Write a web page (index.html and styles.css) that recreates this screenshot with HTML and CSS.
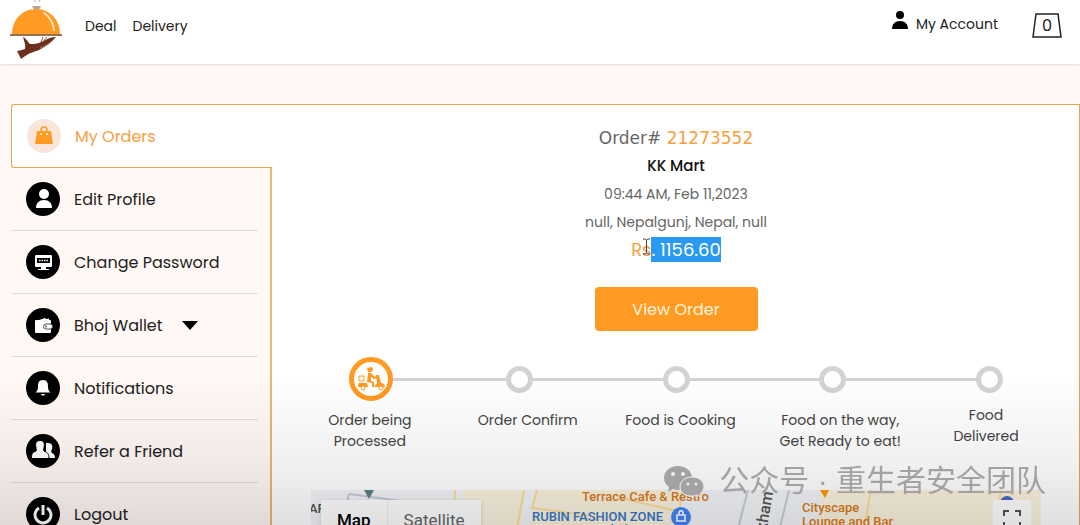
FILE: index.html
```html
<!DOCTYPE html>
<html lang="en">
<head>
  <meta charset="UTF-8" />
  <meta name="viewport" content="width=device-width, initial-scale=1.0"/>
  <title>My Orders</title>
  <link rel="stylesheet" href="styles.css">
</head>
<body>
  <header class="header">
    <a href="#" class="logo" aria-label="Home">
      <svg width="52" height="60" viewBox="0 0 52 60">
        <path d="M24 0l2 2M29 2l1-2" stroke="#aaa" fill="none"/>
        <path d="M22 6h9l-2 4h-5z" fill="#b9a79a"/>
        <path d="M2 34C2 20 12 9 26 9s24 11 24 25z" fill="#ff9a22"/>
        <path d="M34 13c6 4 9 9 10 17" stroke="#ffe3b8" stroke-width="2" fill="none" stroke-linecap="round"/>
        <path d="M0 34h52v2H0z" fill="#96724f"/>
        <path d="M13 37c3 1 5 5 7 7 4 0 7 0 11-2 5-2 9-5 15-5-5 6-11 10-17 13-5 2-9 2-18 9l-4-8c4-1 6-1 8-2 1-4-1-8-2-12z" fill="#6b2f1c"/>
        <path d="M37 37l-5 6M33 37l-2 5" stroke="#8a5a40" fill="none"/>
        <path d="M44 39c-5 5-9 7-14 9" stroke="#a9806a" fill="none"/>
      </svg>
    </a>
    <nav class="navbar">
      <a href="#">Deal</a>
      <a href="#">Delivery</a>
    </nav>
    <div class="header-right">
      <a href="#" class="account">
        <svg width="16" height="20" viewBox="0 0 16 20"><circle cx="8" cy="5" r="4"/><path d="M0 19c0-5 3-8 8-8s8 3 8 8z"/></svg>
        <span>My Account</span>
      </a>
      <button class="cart" aria-label="Cart">
        <svg width="30" height="26" viewBox="0 0 30 26"><path d="M4 1h22l3 23H1z" fill="none" stroke="#222" stroke-width="1.5"/></svg>
        <span>0</span>
      </button>
    </div>
  </header>

  <main class="account-page">
    <aside class="sidebar">
      <a href="#" class="side-link active">
        <svg width="34" height="34" viewBox="0 0 34 34"><circle cx="17" cy="17" r="17" fill="#fae6d8"/><path d="M10 12h14l2 13H8z" fill="#ff9a22"/><path d="M14 14v-3c0-4 6-4 6 0v3" fill="none" stroke="#ff9a22" stroke-width="1.5"/><circle cx="14" cy="15" r="1" fill="#fff"/><circle cx="20" cy="15" r="1" fill="#fff"/></svg>
        <span>My Orders</span>
      </a>
      <ul class="side-menu">
        <li><a href="#" class="side-link">
          <svg width="34" height="34" viewBox="0 0 34 34"><circle cx="17" cy="17" r="17"/><circle cx="18" cy="12" r="5" fill="#fff"/><path d="M10 26c0-5 3-8 8-8s8 3 8 8z" fill="#fff"/></svg>
          <span>Edit Profile</span></a></li>
        <li><a href="#" class="side-link">
          <svg width="34" height="34" viewBox="0 0 34 34"><circle cx="17" cy="17" r="17"/><rect x="9" y="10" width="17" height="12" rx="1" fill="#fff"/><path d="M15 22h5v2h3v1H12v-1h3z" fill="#fff"/><rect x="11" y="13" width="13" height="5"/><path d="M13 15.500h9" stroke="#fff" stroke-width="1.500" stroke-dasharray="1.500 1"/></svg>
          <span>Change Password</span></a></li>
        <li><a href="#" class="side-link">
          <svg width="34" height="34" viewBox="0 0 34 34"><circle cx="17" cy="17" r="17"/><path d="M13 12l6-2 1 1 3-.5V12z" fill="#fff"/><rect x="9" y="12" width="16" height="13" rx="1" fill="#fff"/><rect x="17.500" y="16" width="9" height="5" rx="2.500" fill="#fff" stroke="#555"/><circle cx="20" cy="18.500" r="1" fill="#555"/></svg>
          <span>Bhoj Wallet</span>
          <svg class="caret" width="16" height="9" viewBox="0 0 16 9"><path d="M0 0h16L8 9z"/></svg></a></li>
        <li><a href="#" class="side-link">
          <svg width="34" height="34" viewBox="0 0 34 34"><circle cx="17" cy="17" r="17"/><path d="M17 9c4 0 5 3 5 6 0 4 1 5 2.500 6.500h-15C11 20 12 19 12 15c0-3 1-6 5-6zM15 23h4c0 2-4 2-4 0z" fill="#fff"/></svg>
          <span>Notifications</span></a></li>
        <li><a href="#" class="side-link">
          <svg width="34" height="34" viewBox="0 0 34 34"><circle cx="17" cy="17" r="17"/><path d="M22 9c4 0 5 3 4 6-1 2-1 3 0 4 2 1 3 2 3 5h-9V9z" fill="#fff"/><path d="M14 6.500c4 0 5 3 4 7-.5 3-1 3 1 4 2 1 4 2 4 7H5.500c0-5 1-6 3.500-7s1-1 1-4c-1-4 0-7 4-7z" fill="#fff" stroke="#000"/></svg>
          <span>Refer a Friend</span></a></li>
        <li><a href="#" class="side-link">
          <svg width="34" height="34" viewBox="0 0 34 34"><circle cx="17" cy="17" r="17"/><path d="M13 11a8 8 0 1 0 8 0M17 8v10" fill="none" stroke="#fff" stroke-width="3"/></svg>
          <span>Logout</span></a></li>
      </ul>
    </aside>

    <section class="content">
      <div class="order-info">
        <p class="order-number">Order# <span>21273552</span></p>
        <p class="shop">KK Mart</p>
        <p>09:44 AM, Feb 11,2023</p>
        <p>null, Nepalgunj, Nepal, null</p>
        <p class="price">Rs<mark>. 1156.60</mark>
          <svg class="ibeam" width="7" height="17" viewBox="0 0 7 17"><path d="M0 1h2l1.500 1L5 1h2M0 16h2l1.500-1L5 16h2M3.500 2v13" fill="none" stroke="#444"/></svg>
        </p>
        <button class="view-btn">View Order</button>
      </div>

      <div class="steps">
        <div class="step current">
          <svg width="28" height="26" viewBox="0 0 28 26"><path d="M10 2l5-1 1 2-1 3h-4z" fill="#ff9a22"/><path d="M11 7h3l4 4 3-1v2l-4 1-3-2v4l3 1v5h-2v-4l-5-1z" fill="#ff9a22"/><path d="M2 10h5v5H2z" fill="none" stroke="#ff9a22"/><path d="M2 17h8l1 4h6l3-4-1-8h3l2 8c2 0 4 2 4 4H1c0-2 0-3 1-4z" fill="#ff9a22"/><circle cx="6" cy="22" r="2" fill="#fff" stroke="#ff9a22"/><circle cx="24" cy="22" r="2" fill="#fff" stroke="#ff9a22"/></svg>
        </div>
        <div class="line short"></div>
        <div class="step"></div>
        <div class="line"></div>
        <div class="step"></div>
        <div class="line"></div>
        <div class="step"></div>
        <div class="line"></div>
        <div class="step"></div>
      </div>
      <ul class="step-labels">
        <li>Order being<br>Processed</li>
        <li>Order Confirm</li>
        <li>Food is Cooking</li>
        <li>Food on the way,<br>Get Ready to eat!</li>
        <li>Food<br>Delivered</li>
      </ul>

      <div class="map">
        <svg class="map-roads" width="732" height="120" viewBox="0 0 732 120">
          <rect width="732" height="120" fill="#f3f5f9"/>
          <path d="M152 0h61l-10 120h-60zM224 0h147l-14 120H210zM512 0h220v120H490z" fill="#fcf3df"/>
          <path d="M144 0l-3 120M213 0l-9 50M226 0l-5 18 60 8M310 8l60 14M371 0l-6 50M560 0l-9 50M690 0l-2 12" fill="none" stroke="#fbdf9a" stroke-width="2"/>
          <path d="M38 4l-3 12M38 4l60 8M437 0l-13 50M478 0l-12 50" fill="none" stroke="#c9cdd6" stroke-width="2"/>
          <path d="M53 0h10l-5 9z" fill="#5f7e88"/>
          <path d="M509 0h9l-4 8z" fill="#ff9800"/>
          <circle cx="696" cy="13" r="7" fill="#4b68c9"/>
          <circle cx="370" cy="27" r="10" fill="#4285f4"/>
          <path d="M366 25h8v6h-8zM368 25v-2c0-3 4-3 4 0v2" fill="none" stroke="#fff" stroke-width="1.500"/>
        </svg>
        <span class="place gray ar">AR</span>
        <span class="place orange terrace">Terrace Cafe &amp; Restro</span>
        <span class="place blue rubin">RUBIN FASHION ZONE</span>
        <span class="place blue clothing">Clothing store</span>
        <span class="place gray street">kham</span>
        <span class="place orange cityscape">Cityscape<br>Lounge and Bar</span>
        <div class="map-type">
          <button class="selected">Map</button>
          <button>Satellite</button>
        </div>
        <button class="fullscreen" aria-label="Toggle fullscreen view">
          <svg width="18" height="18" viewBox="0 0 18 18"><path d="M1 6V1h5M12 1h5v5M17 12v5h-5M6 17H1v-5" fill="none" stroke="#555" stroke-width="2"/></svg>
        </button>
      </div>
    </section>
  </main>

  <div class="shade"></div>
  <div class="watermark">
    <svg width="42" height="32" viewBox="0 0 42 32"><path d="M15 1C7 1 1 6 1 13c0 4 2 7 5 9l-1 5 5-3c2 1 5 1 7 1-1-8 5-13 12-13C28 5 22 1 15 1z"/><path d="M29 12c-7 0-12 4-12 10s5 9 12 9c2 0 3 0 5-1l4 2-1-3c2-2 4-4 4-7 0-6-5-10-12-10z" stroke="#eee"/><g fill="#eee"><circle cx="10" cy="9" r="2"/><circle cx="20" cy="9" r="2"/><circle cx="25" cy="19" r="1.500"/><circle cx="33" cy="19" r="1.500"/></g></svg>
    <span>公众号 · 重生者安全团队</span>
  </div>
</body>
</html>
```

FILE: styles.css
```css
* { box-sizing: border-box; }

body {
  margin: 0;
  height: 100vh;
  overflow: hidden;
  background: #fff8f4;
  color: #222;
  font-family: Poppins, Inter, sans-serif;
  font-size: 16px;
}

a { color: inherit; text-decoration: none; }
button { font-family: inherit; border: none; cursor: pointer; }
ul { list-style: none; margin: 0; padding: 0; }
svg { display: block; flex-shrink: 0; }

.header { display: flex; align-items: flex-start; height: 64px; padding: 0 18px 0 10px; background: #fff; box-shadow: 0 1px 2px rgba(0,0,0,0.12); font-size: 14px; }
.navbar { display: flex; gap: 16px; margin-left: 23px; line-height: 52px; }
.header-right { display: flex; align-items: flex-start; gap: 34px; margin-left: auto; }
.account { display: flex; gap: 8px; line-height: 48px; }
.account svg { margin-top: 10px; }
.cart { position: relative; width: 30px; height: 26px; margin-top: 13px; padding: 0; background: none; font-size: 16px; line-height: 26px; color: #222; }
.cart svg { position: absolute; top: 0; left: 0; }

.account-page { display: flex; align-items: flex-start; padding: 40px 0 0 11px; }

.sidebar { width: 261px; flex-shrink: 0; }
.side-link { display: flex; align-items: center; height: 62px; padding-left: 15px; gap: 14px; font-size: 16px; }
.side-link.active { height: 64px; background: #fff; border: 1px solid #e2a655; border-right: none; border-radius: 3px 0 0 3px; color: #f6a040; }
.caret { margin-left: 5px; }
.side-menu { padding-right: 12px; border-right: 2px solid #e9b771; }
.side-menu li { border-bottom: 1px solid #e6dbd8; }

.content { flex: 1; min-width: 0; padding: 19px 38px 0 39px; background: #fff; border-top: 1px solid #e2a655; border-right: 1px solid #e2a655; }

.order-info { text-align: center; color: #666; font-size: 14px; line-height: 28px; }
.order-info p { margin: 0; }
.order-number { font-family: "DejaVu Sans", sans-serif; font-size: 17px; }
.order-number span { color: #f6a040; }
.order-info .shop { color: #111; font-size: 15px; font-weight: 500; }
.price { position: relative; width: 92px; color: #f6a040; font-size: 18px; white-space: nowrap; }
.order-info .price { margin: 0 auto; }
.price mark { background: #2a9af0; color: #fff; }
.ibeam { position: absolute; top: 2px; left: 13px; }
.view-btn { width: 163px; height: 44px; margin-top: 23px; background: #ff9a22; border-radius: 4px; color: #fff3dc; font-size: 16px; }

.steps { display: flex; align-items: center; margin-top: 26px; padding: 0 38px; }
.step { width: 27px; height: 27px; flex-shrink: 0; border: 5px solid #d3d3d3; border-radius: 50%; background: #fff; }
.step.current { display: flex; align-items: center; justify-content: center; width: 44px; height: 44px; border-color: #ff9a22; }
.line { flex: 130; height: 3px; background: #d3d3d3; }
.line.short { flex: 113; }
.step-labels { display: grid; grid-template-columns: 156fr 160fr 146fr 174fr 118fr; margin: 4px -4px 0 -19px; font-size: 14px; line-height: 21px; text-align: center; color: #444; }
.step-labels li { padding-top: 5px; white-space: nowrap; }
.step-labels li:last-child { padding-top: 0; }

.map { position: relative; height: 120px; margin-top: 38px; overflow: hidden; background: #f3f5f9; }
.map-roads { position: absolute; top: 0; left: 0; }
.place { position: absolute; font: 500 13px/14px Roboto, sans-serif; white-space: nowrap; }
.orange { color: #d97b1c; }
.blue { color: #3578c8; }
.gray { color: #555; }
.ar { top: 12px; left: -2px; }
.terrace { top: 0; left: 271px; }
.rubin { top: 20px; left: 221px; }
.clothing { top: 33px; left: 292px; font-size: 12px; }
.street { top: 14px; left: 434px; font-size: 16px; transform: rotate(-80deg); }
.cityscape { top: 11px; left: 491px; }
.map-type { position: absolute; top: 10px; left: 10px; display: flex; box-shadow: 0 1px 4px rgba(0,0,0,0.15); }
.map-type button { height: 40px; padding: 0 16px; background: #fff; color: #666; font: 17px Roboto, sans-serif; }
.map-type .selected { border-right: 1px solid #eee; color: #000; font-weight: 500; }
.fullscreen { position: absolute; top: 10px; right: 10px; width: 38px; height: 38px; padding: 10px; background: #fff; }

.shade { position: fixed; left: 0; right: 0; bottom: 0; height: 150px; background: linear-gradient(rgba(0,0,0,0), rgba(0,0,0,0.06) 60%, rgba(0,0,0,0.12)); pointer-events: none; }
.watermark { position: fixed; right: 34px; bottom: 22px; display: flex; align-items: center; gap: 14px; color: #a2a2a2; fill: #a2a2a2; font: 30px/44px "Liberation Sans", "Noto Sans CJK SC", sans-serif; pointer-events: none; }
```
